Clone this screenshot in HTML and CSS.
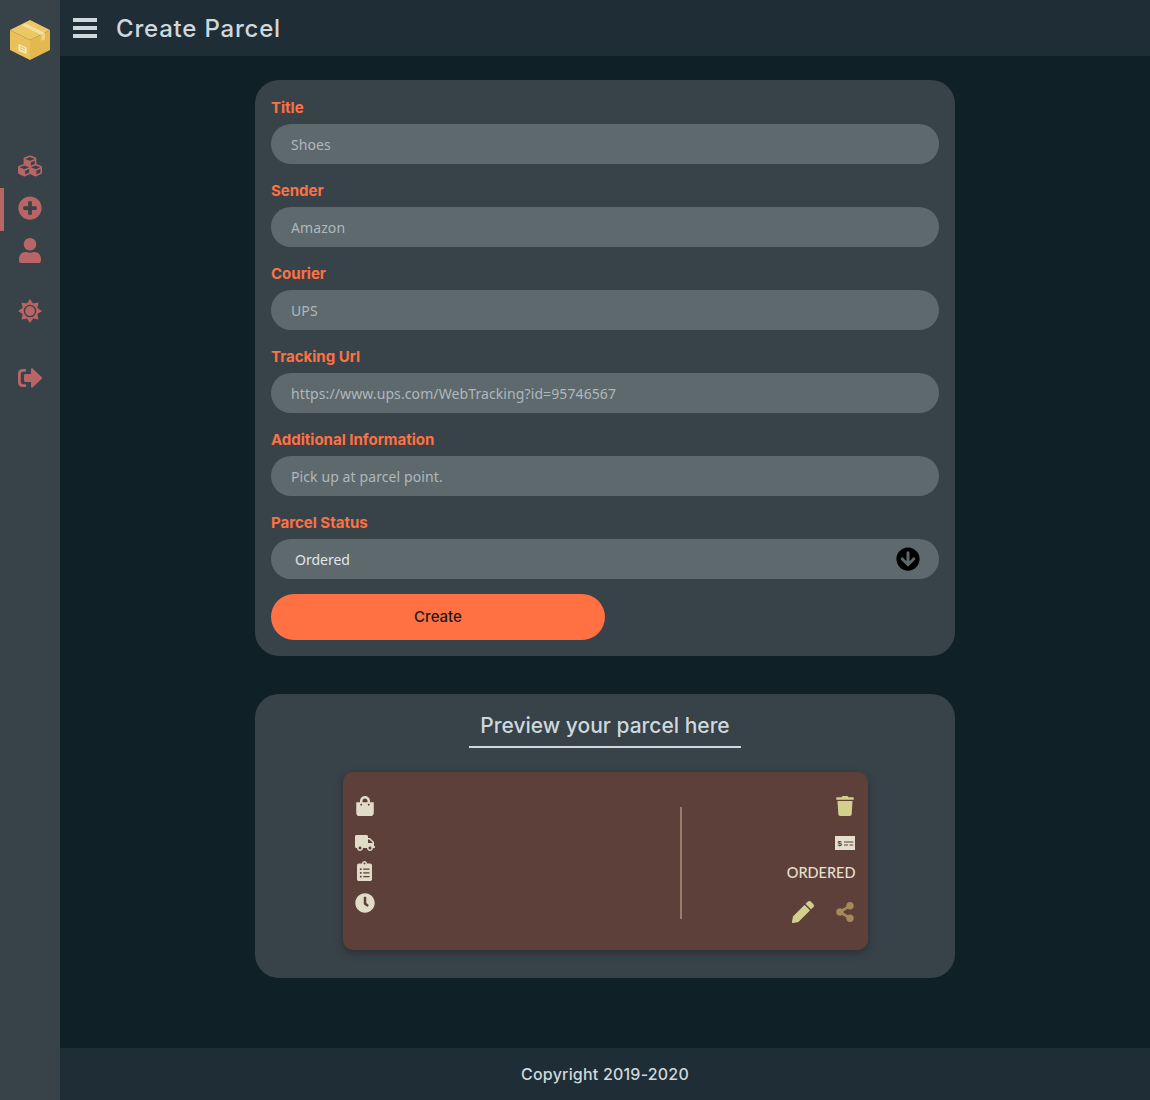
FILE: index.html
```html
<!DOCTYPE html>
<html lang="en">
<head>
<meta charset="utf-8">
<title>Create Parcel</title>
<link rel="stylesheet" href="styles.css">
</head>
<body>
<aside class="sidebar">
  <svg class="logo" viewBox="0 0 40 40" width="40" height="40">
    <polygon points="20,0 40,10 20,20 0,10" fill="#edc765"/>
    <polygon points="0,10 20,20 20,40 0,30" fill="#e9c05a"/>
    <polygon points="40,10 20,20 20,40 40,30" fill="#e3b850"/>
    <polygon points="11.5,5 15,3.3 35,13 31.500,15" fill="#f5e0a0"/>
    <polygon points="31.500,15 35,13 35,19 31.500,21" fill="#f1d585"/>
    <polygon points="8.500,24 16.500,27.500 16.500,34 8.500,30.500" fill="#f7ecc6"/>
    <path d="M10 26.500l5 2.200M10 28.800l5 2.200" stroke="#d9ad48" stroke-width="0.800"/>
  </svg>
  <nav class="side-nav">
    <a class="side-link link-cubes"><svg viewBox="0 0 512 512" width="24" height="24" class="side-icon"><path d="M488.600 250.200L392 214V105.500c0-15-9.300-28.400-23.400-33.700l-100-37.500c-8.100-3.100-17.100-3.100-25.300 0l-100 37.500c-14.100 5.300-23.400 18.700-23.400 33.700V214l-96.600 36.200C9.300 255.500 0 268.900 0 283.900V394c0 13.600 7.700 26.100 19.900 32.200l100 50c10.100 5.100 22.100 5.100 32.200 0l103.900-52 103.900 52c10.100 5.100 22.100 5.100 32.200 0l100-50c12.200-6.100 19.900-18.600 19.900-32.200V283.900c0-15-9.300-28.400-23.400-33.700zM358 214.800l-85 31.900v-68.200l85-37v73.300zM154 104.100l102-38.200 102 38.200v.6l-102 41.400-102-41.400v-.6zm84 291.100l-85 42.500v-79.100l85-38.800v75.400zm0-112l-102 41.400-102-41.400v-.6l102-38.200 102 38.200v.6zm240 112l-85 42.500v-79.100l85-38.800v75.400zm0-112l-102 41.400-102-41.400v-.6l102-38.200 102 38.200v.6z"/></svg></a>
    <a class="side-link active link-plus"><svg viewBox="0 0 512 512" width="24" height="24" class="side-icon"><path d="M256 8C119 8 8 119 8 256s111 248 248 248 248-111 248-248S393 8 256 8zm144 276c0 6.600-5.400 12-12 12h-92v92c0 6.600-5.400 12-12 12h-56c-6.600 0-12-5.400-12-12v-92h-92c-6.600 0-12-5.400-12-12v-56c0-6.600 5.400-12 12-12h92v-92c0-6.600 5.400-12 12-12h56c6.600 0 12 5.400 12 12v92h92c6.600 0 12 5.400 12 12v56z"/></svg></a>
    <a class="side-link link-user"><svg viewBox="0 0 448 512" width="22" height="25" class="side-icon"><path d="M224 256c70.700 0 128-57.300 128-128S294.700 0 224 0 96 57.300 96 128s57.300 128 128 128zm89.600 32h-16.700c-22.200 10.200-46.900 16-72.900 16s-50.600-5.800-72.900-16h-16.700C60.200 288 0 348.200 0 422.400V464c0 26.500 21.500 48 48 48h352c26.500 0 48-21.500 48-48v-41.600c0-74.200-60.200-134.400-134.400-134.400z"/></svg></a>
    <a class="side-link link-sun"><svg viewBox="0 0 24 24" width="24" height="24" class="side-icon"><path fill-rule="evenodd" d="M12 0L15.060 4.610 20.490 3.510 19.390 8.940 24 12 19.390 15.060 20.490 20.490 15.060 19.390 12 24 8.940 19.390 3.510 20.490 4.610 15.060 0 12 4.610 8.940 3.510 3.510 8.940 4.610zM12 5.700a6.300 6.300 0 1 0 0 12.600 6.300 6.300 0 0 0 0-12.600z"/><circle cx="12" cy="12" r="4.900"/></svg></a>
    <a class="side-link link-out"><svg viewBox="0 0 24 20" width="24" height="20" class="side-icon"><path d="M13 1.500c0-1 1.100-1.500 1.800-.8l8.800 8.400c.5.500.5 1.300 0 1.800l-8.800 8.400c-.7.700-1.800.2-1.800-.8V14H7.500c-.8 0-1.500-.7-1.500-1.500v-5C6 6.700 6.700 6 7.500 6H13zM8 1v2.800H5c-1.200 0-2.200 1-2.200 2.200v8c0 1.200 1 2.200 2.200 2.200h3V19H4.500C2 19 0 17 0 14.500v-9C0 3 2 1 4.500 1z"/></svg></a>
  </nav>
</aside>
<div class="main">
  <header class="topbar">
    <svg class="menu-icon" viewBox="0 0 24 20" width="24" height="20"><path d="M0 0h24v4H0zM0 8h24v4H0zM0 16h24v4H0z"/></svg>
    <h1 class="page-title">Create Parcel</h1>
  </header>
  <main class="content">
    <form class="card form-card">
      <div class="field"><label class="field-label">Title</label><input class="field-input" placeholder="Shoes"></div>
      <div class="field"><label class="field-label">Sender</label><input class="field-input" placeholder="Amazon"></div>
      <div class="field"><label class="field-label">Courier</label><input class="field-input" placeholder="UPS"></div>
      <div class="field"><label class="field-label">Tracking Url</label><input class="field-input" placeholder="https://www.ups.com/WebTracking?id=95746567"></div>
      <div class="field"><label class="field-label">Additional Information</label><input class="field-input" placeholder="Pick up at parcel point."></div>
      <div class="field"><label class="field-label">Parcel Status</label>
        <div class="select-box"><span>Ordered</span>
          <svg viewBox="0 0 512 512" width="24" height="24"><path d="M504 256c0 137-111 248-248 248S8 393 8 256 119 8 256 8s248 111 248 248zm-143.600-28.900L288 302.600V120c0-13.300-10.700-24-24-24h-16c-13.300 0-24 10.700-24 24v182.600l-72.400-75.500c-9.300-9.700-24.800-9.900-34.300-.4l-10.900 11c-9.400 9.400-9.400 24.600 0 33.900L239 404.300c9.400 9.400 24.600 9.400 33.900 0l132.700-132.700c9.400-9.400 9.400-24.600 0-33.900l-10.900-10.900c-9.500-9.500-25-9.300-34.300.4z"/></svg>
        </div>
      </div>
      <button class="create-btn" type="button">Create</button>
    </form>
    <section class="card preview-card">
      <h2 class="preview-title">Preview your parcel here</h2>
      <div class="parcel">
        <div class="parcel-left">
          <svg class="p-icon i-bag" viewBox="0 0 448 512" width="18" height="20"><path d="M352 160v-32C352 57.420 294.579 0 224 0 153.420 0 96 57.420 96 128v32H0v272c0 44.183 35.817 80 80 80h288c44.183 0 80-35.817 80-80V160h-96zm-192-32c0-35.290 28.710-64 64-64s64 28.710 64 64v32H160v-32zm160 120c-13.255 0-24-10.745-24-24s10.745-24 24-24 24 10.745 24 24-10.745 24-24 24zm-192 0c-13.255 0-24-10.745-24-24s10.745-24 24-24 24 10.745 24 24-10.745 24-24 24z"/></svg>
          <svg class="p-icon i-truck" viewBox="0 0 640 512" width="20" height="16"><path d="M624 352h-16V243.900c0-12.700-5.100-24.900-14.100-33.900L494 110.100c-9-9-21.200-14.100-33.900-14.100H416V48c0-26.500-21.500-48-48-48H48C21.500 0 0 21.500 0 48v320c0 26.500 21.500 48 48 48h16c0 53 43 96 96 96s96-43 96-96h128c0 53 43 96 96 96s96-43 96-96h48c8.800 0 16-7.200 16-16v-32c0-8.800-7.200-16-16-16zM160 464c-26.500 0-48-21.500-48-48s21.500-48 48-48 48 21.500 48 48-21.500 48-48 48zm320 0c-26.500 0-48-21.500-48-48s21.500-48 48-48 48 21.500 48 48-21.500 48-48 48zm80-208H416V144h44.100l99.900 99.900V256z"/></svg>
          <svg class="p-icon i-clip" viewBox="0 0 384 512" width="15" height="20"><path d="M336 64h-80c0-35.300-28.700-64-64-64s-64 28.700-64 64H48C21.500 64 0 85.500 0 112v352c0 26.500 21.500 48 48 48h288c26.500 0 48-21.500 48-48V112c0-26.500-21.500-48-48-48zM96 424c-13.300 0-24-10.700-24-24s10.700-24 24-24 24 10.700 24 24-10.700 24-24 24zm0-96c-13.300 0-24-10.700-24-24s10.700-24 24-24 24 10.700 24 24-10.700 24-24 24zm0-96c-13.300 0-24-10.700-24-24s10.700-24 24-24 24 10.700 24 24-10.700 24-24 24zm96-192c13.300 0 24 10.700 24 24s-10.700 24-24 24-24-10.700-24-24 10.700-24 24-24zm128 368c0 4.400-3.600 8-8 8H168c-4.400 0-8-3.600-8-8v-16c0-4.400 3.600-8 8-8h144c4.400 0 8 3.600 8 8v16zm0-96c0 4.400-3.600 8-8 8H168c-4.400 0-8-3.600-8-8v-16c0-4.400 3.600-8 8-8h144c4.400 0 8 3.600 8 8v16zm0-96c0 4.400-3.600 8-8 8H168c-4.400 0-8-3.600-8-8v-16c0-4.400 3.600-8 8-8h144c4.400 0 8 3.600 8 8v16z"/></svg>
          <svg class="p-icon i-clock" viewBox="0 0 512 512" width="20" height="20"><path d="M256 8C119 8 8 119 8 256s111 248 248 248 248-111 248-248S393 8 256 8zm92.490 313l-20 25a16 16 0 0 1-22.490 2.500l-67-49.720a40 40 0 0 1-15-31.230V112a16 16 0 0 1 16-16h32a16 16 0 0 1 16 16v144l58 42.500a16 16 0 0 1 2.490 22.500z"/></svg>
        </div>
        <div class="parcel-divider"></div>
        <div class="parcel-right">
          <svg class="i-trash" viewBox="0 0 448 512" width="18" height="20"><path d="M432 32H312l-9.400-18.700A24 24 0 0 0 281.100 0H166.800a23.720 23.720 0 0 0-21.400 13.300L136 32H16A16 16 0 0 0 0 48v32a16 16 0 0 0 16 16h416a16 16 0 0 0 16-16V48a16 16 0 0 0-16-16zM53.200 467a48 48 0 0 0 47.900 45h245.800a48 48 0 0 0 47.900-45L416 128H32z"/></svg>
          <svg class="i-check" viewBox="0 0 20 14" width="20" height="14"><path fill-rule="evenodd" d="M0 0h20v14H0zM9 5.400v1.200h9.300V5.400zM9 8.400v1.200h4V8.400zM14.500 8.400v1.200h3.800V8.400z" fill="#e4e0cd"/><text class="check-sign" x="2.500" y="10.300">$</text></svg>
          <div class="status">ORDERED</div>
          <div class="actions">
            <svg class="i-pencil" viewBox="0 0 512 512" width="22" height="22"><path d="M497.900 142.100l-46.100 46.100c-4.700 4.700-12.300 4.700-17 0l-111-111c-4.700-4.700-4.700-12.300 0-17l46.100-46.100c18.700-18.700 49.100-18.700 67.900 0l60.100 60.100c18.800 18.700 18.800 49.100 0 67.900zM284.200 99.800L21.600 362.400.4 483.900c-2.900 16.400 11.400 30.600 27.800 27.800l121.500-21.300 262.600-262.600c4.700-4.700 4.700-12.300 0-17l-111-111c-4.800-4.700-12.400-4.700-17.100 0z"/></svg>
            <svg class="i-share" viewBox="0 0 448 512" width="18" height="20"><path d="M352 320c-22.608 0-43.387 7.819-59.790 20.895l-102.486-64.054a96.551 96.551 0 0 0 0-41.683l102.486-64.054C308.613 184.181 329.392 192 352 192c53.019 0 96-42.981 96-96S405.019 0 352 0s-96 42.981-96 96c0 7.158.79 14.130 2.276 20.841L155.790 180.895C139.387 167.819 118.608 160 96 160c-53.019 0-96 42.981-96 96s42.981 96 96 96c22.608 0 43.387-7.819 59.790-20.895l102.486 64.054A96.301 96.301 0 0 0 256 416c0 53.019 42.981 96 96 96s96-42.981 96-96-42.981-96-96-96z"/></svg>
          </div>
        </div>
      </div>
    </section>
  </main>
  <footer class="footer">Copyright 2019-2020</footer>
</div>
</body>
</html>
```
FILE: styles.css
```css
* { box-sizing: border-box; }
html, body { margin: 0; height: 1100px; }
body {
  display: flex;
  background: #102027;
  font-family: "Inter", "Liberation Sans", sans-serif;
  overflow: hidden;
}
.sidebar {
  width: 60px;
  flex: none;
  background: #384349;
  display: flex;
  flex-direction: column;
  align-items: center;
}
.logo { margin-top: 20px; flex: none; }
.side-nav { margin-top: 85px; width: 100%; display: flex; flex-direction: column; }
.side-link {
  display: flex;
  align-items: center;
  justify-content: center;
  height: 43px;
  padding-bottom: 4px;
}
.side-icon { fill: #b96565; display: block; }
.link-cubes { padding-bottom: 2px; }
.active { box-shadow: inset 4px 0 0 #b96565; }
.link-sun { margin-top: 17px; }
.link-out { margin-top: 24px; }
.main { flex: 1; min-width: 0; display: flex; flex-direction: column; }
.topbar {
  height: 56px;
  flex: none;
  background: #1f2d36;
  display: flex;
  align-items: center;
  padding-left: 13px;
}
.menu-icon { fill: #cfd8dc; flex: none; }
.page-title {
  margin: 0 0 0 19px;
  font-size: 24px;
  font-weight: 500;
  color: #cfd8dc;
  letter-spacing: 0.8px;
}
.content {
  flex: 1;
  padding-top: 24px;
  display: flex;
  flex-direction: column;
  align-items: center;
  gap: 38px;
}
.card { width: 700px; background: #384349; border-radius: 24px; }
.form-card { padding: 16px; }
.field { display: flex; flex-direction: column; margin-bottom: 15px; }
.field-label {
  height: 28px;
  padding-top: 3px;
  font-size: 15px;
  line-height: 17px;
  font-weight: 700;
  color: #ff7043;
}
.field-input {
  height: 40px;
  border: 0;
  border-radius: 20px;
  background: #5e696e;
  padding: 0 20px;
  font: 14px "Noto Sans", sans-serif;
  letter-spacing: 0.1px;
  color: #cfd8dc;
  outline: 0;
}
.field-input::placeholder { color: #afb8bb; opacity: 1; }
.select-box {
  height: 40px;
  border-radius: 20px;
  background: #5e696e;
  padding: 0 19px 0 24px;
  display: flex;
  align-items: center;
  justify-content: space-between;
  font: 14px "Noto Sans", sans-serif;
  color: #e0e6e8;
}
.create-btn {
  display: block;
  width: 334px;
  height: 46px;
  padding: 0 0 2px;
  border: 0;
  border-radius: 23px;
  background: #ff7043;
  color: #1a1a1a;
  font: 500 15px "Inter", sans-serif;
}
.preview-card { height: 284px; padding-top: 18px; display: flex; flex-direction: column; align-items: center; }
.preview-title {
  margin: 0;
  width: 272px;
  height: 36px;
  border-bottom: 2px solid #cfd8dc;
  text-align: center;
  font-size: 21px;
  line-height: 28px;
  font-weight: 500;
  color: #cfd8dc;
}
.parcel {
  margin-top: 24px;
  width: 525px;
  height: 178px;
  background: #5d4039;
  border-radius: 10px;
  box-shadow: 0 3px 8px rgba(0,0,0,.3);
  display: flex;
}
.parcel-left {
  width: 337px;
  flex: none;
  display: flex;
  flex-direction: column;
  padding: 24px 0 0 12px;
}
.p-icon { fill: #e0dcc8; display: block; margin-left: 1px; }
.i-truck { margin: 19px 0 0 0; }
.i-clip { margin: 10px 0 0 2px; }
.i-clock { margin: 12px 0 0 0; }
.parcel-divider { width: 2px; height: 112px; margin-top: 35px; background: #9b7b6e; flex: none; }
.parcel-right {
  flex: 1;
  display: flex;
  flex-direction: column;
  align-items: flex-end;
  padding: 24px 12px 0 0;
}
.i-trash { fill: #d3cf8c; display: block; margin-right: 2px; }
.i-check { display: block; margin-top: 20px; margin-right: 1px; }
.check-sign { font: 700 8px "Liberation Sans", sans-serif; fill: #5d4039; }
.status {
  margin-top: 14px;
  font: 14.5px/18px "Lato", sans-serif;
  font-weight: 500;
  color: #e6e1cf;
}
.actions { margin-top: 19px; display: flex; align-items: center; gap: 22px; margin-right: 2px; }
.i-pencil { fill: #d3cf8c; display: block; }
.i-share { fill: #a68a5b; display: block; }
.footer {
  margin-top: auto;
  height: 52px;
  flex: none;
  background: #1f2d36;
  display: flex;
  align-items: center;
  justify-content: center;
  font-size: 16px;
  letter-spacing: 0.2px;
  font-weight: 500;
  color: #cfd8dc;
}
```
